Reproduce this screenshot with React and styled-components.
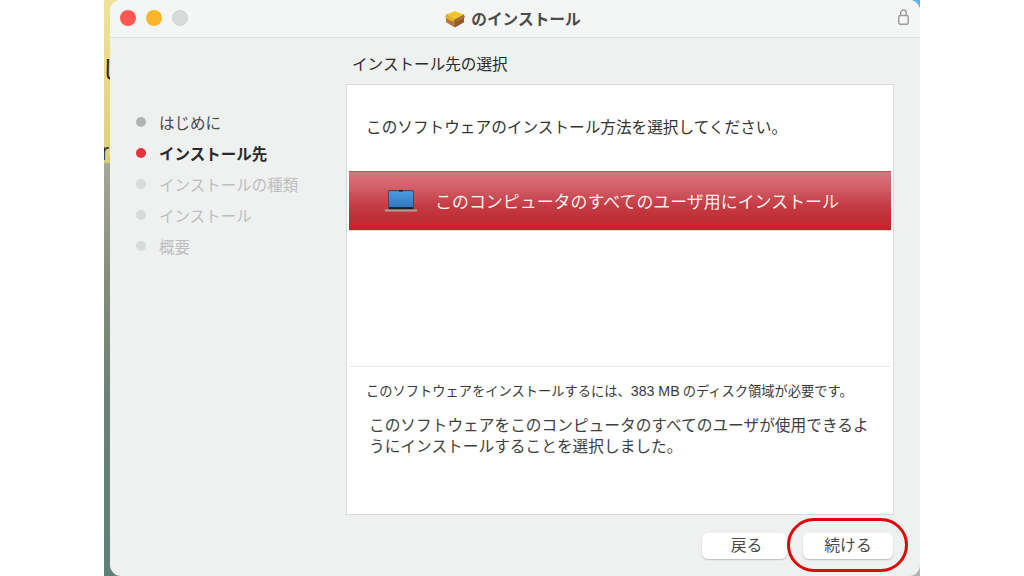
import React from 'react';
import styled, {createGlobalStyle} from 'styled-components';

const GlobalStyle = createGlobalStyle`
  html, body {
    margin: 0;
    padding: 0;
    background: #fff;
  }
  body {
    font-family: "Liberation Sans", "Noto Sans CJK JP", sans-serif;
  }
`

const steps = [
  {label: 'はじめに', state: 'done'},
  {label: 'インストール先', state: 'active'},
  {label: 'インストールの種類', state: 'todo'},
  {label: 'インストール', state: 'todo'},
  {label: '概要', state: 'todo'},
]

const dotColor = {done: '#b2b3b3', active: '#e5343d', todo: '#d9dada'}
const textColor = {done: '#4a4a4a', active: '#2a2a2a', todo: '#bdbebe'}

const PackageIcon = () => (
  <svg width="20" height="18" viewBox="0 0 21 19">
    <path d="M10.5 7 L20 4.5 V13 L10.5 18.5 Z" fill="#8f5a30"/>
    <path d="M10.5 7 L1 4.5 V13 L10.5 18.5 Z" fill="#b8743c"/>
    <path d="M1 5 L10.5 1 L20 5 L10.5 10 Z" fill="#f0c52c"/>
    <path d="M1 5 L10.5 10 L8 12.5 L0 8 Z" fill="#e3b128"/>
    <path d="M20 5 L10.5 10 L13 12.5 L21 8 Z" fill="#a96f38"/>
  </svg>
)

const LockIcon = () => (
  <svg width="11" height="16" viewBox="0 0 11 16" fill="none" stroke="#9a9a9a" strokeWidth="1.4">
    <rect x="0.8" y="6.5" width="9.4" height="8.7" rx="1.5"/>
    <path d="M2.7 6.5 V3.8 C2.7 0 8.3 0 8.3 3.8 V6.5"/>
  </svg>
)

const LaptopIcon = () => (
  <svg width="34" height="22" viewBox="0 0 34 22">
    <defs>
      <linearGradient id="screen" x1="0" y1="0" x2="0" y2="1">
        <stop offset="0" stopColor="#4a9be0"/>
        <stop offset="1" stopColor="#2f78bd"/>
      </linearGradient>
    </defs>
    <rect x="4" y="0" width="26" height="19.5" rx="1.5" fill="#4a4a4e"/>
    <rect x="5" y="1.2" width="24" height="16" fill="url(#screen)"/>
    <rect x="15" y="0.2" width="4" height="1.2" fill="#111"/>
    <rect x="5" y="17.2" width="24" height="2" fill="#1d1d22"/>
    <path d="M0.5 19.5 H33.5 L33 21 Q33 21.6 32 21.6 H2 Q1 21.6 1 21 Z" fill="#a8a39d"/>
  </svg>
)

const App = () => {
  return (
    <>
      <GlobalStyle/>
      <Stage>
        <WallpaperMark top={56}>し</WallpaperMark>
        <WallpaperMark top={138}>r,</WallpaperMark>
        <Window>
          <TitleBar>
            <Lights>
              <Light color="#fd5753"/>
              <Light color="#fdb52a"/>
              <Light color="#d9dbdb" bordered/>
            </Lights>
            <WindowTitle>
              <PackageIcon/>
              のインストール
            </WindowTitle>
            <LockSlot>
              <LockIcon/>
            </LockSlot>
          </TitleBar>
          <Body>
            <Sidebar>
              {steps.map((el) => (
                <Step key={el.label} state={el.state}>
                  <Dot state={el.state}/>
                  {el.label}
                </Step>
              ))}
            </Sidebar>
            <Main>
              <Heading>インストール先の選択</Heading>
              <Panel>
                <Message>このソフトウェアのインストール方法を選択してください。</Message>
                <Target>
                  <LaptopIcon/>
                  <TargetLabel>このコンピュータのすべてのユーザ用にインストール</TargetLabel>
                </Target>
                <Spacer/>
                <Details>
                  <Size>このソフトウェアをインストールするには、<Amount>383 MB</Amount>のディスク領域が必要です。</Size>
                  <Description>このソフトウェアをこのコンピュータのすべてのユーザが使用できるようにインストールすることを選択しました。</Description>
                </Details>
              </Panel>
              <Footer>
                <Button width={85} shift={4}>戻る</Button>
                <Button width={90}>
                  続ける
                  <Highlight/>
                </Button>
              </Footer>
            </Main>
          </Body>
        </Window>
      </Stage>
    </>
  );
};

const Stage = styled.div`
  position: relative;
  width: 816px;
  height: 576px;
  margin-left: 104px;
  padding-left: 6px;
  box-sizing: border-box;
  overflow: hidden;
  background:
    linear-gradient(90deg, transparent 98%, #5bb4ec 98%) top / 100% 20px no-repeat,
    linear-gradient(90deg, transparent 98%, #b5b5b5 98%) bottom / 100% 20px no-repeat,
    linear-gradient(180deg, #efe39a 0, #dccf7c 162px, #a6a698 164px, #848b7c 280px, #6c8078 400px, #5f7f78 576px);
`
const WallpaperMark = styled.div`
  position: absolute;
  top: ${(p) => p.top}px;
  left: -3px;
  font-size: 24px;
  line-height: 28px;
  color: #2e2b1c;
`
const Window = styled.div`
  width: 810px;
  height: 576px;
  display: flex;
  flex-direction: column;
  background: #eff0f0;
  border-radius: 11px;
  overflow: hidden;
  position: relative;
`
const TitleBar = styled.div`
  height: 37px;
  flex-shrink: 0;
  display: flex;
  align-items: center;
  justify-content: center;
  position: relative;
  background: #f4f5f5;
  border-bottom: 1px solid #dfe0e0;
`
const Lights = styled.div`
  position: absolute;
  left: 10px;
  top: 10px;
  display: flex;
  gap: 10px;
`
const Light = styled.div`
  width: 16px;
  height: 16px;
  border-radius: 50%;
  background: ${(p) => p.color};
  box-sizing: border-box;
  border: ${(p) => (p.bordered ? '1px solid #cfd1d1' : 'none')};
`
const WindowTitle = styled.div`
  display: flex;
  align-items: center;
  gap: 6px;
  font-size: 15.7px;
  font-weight: 700;
  color: #4c4c4c;
  margin-left: -4px;
`
const LockSlot = styled.div`
  position: absolute;
  right: 11px;
  top: 9px;
  display: flex;
`
const Body = styled.div`
  flex: 1;
  display: flex;
  min-height: 0;
`
const Sidebar = styled.div`
  width: 236px;
  flex-shrink: 0;
  box-sizing: border-box;
  padding: 72px 0 0 26px;
  display: flex;
  flex-direction: column;
  gap: 8px;
`
const Step = styled.div`
  display: flex;
  align-items: center;
  gap: 13px;
  height: 23.2px;
  font-size: 15.5px;
  font-weight: ${(p) => (p.state === 'active' ? 700 : 400)};
  color: ${(p) => textColor[p.state]};
`
const Dot = styled.span`
  width: 10px;
  height: 10px;
  border-radius: 50%;
  background: ${(p) => dotColor[p.state]};
`
const Main = styled.div`
  width: 548px;
  display: flex;
  flex-direction: column;
`
const Heading = styled.div`
  height: 46px;
  box-sizing: border-box;
  padding: 17px 0 0 6px;
  font-size: 15.6px;
  line-height: 20px;
  color: #2b2b2b;
`
const Panel = styled.div`
  height: 431px;
  box-sizing: border-box;
  display: flex;
  flex-direction: column;
  background: #fff;
  border: 1px solid #d9dada;
`
const Message = styled.div`
  height: 86px;
  box-sizing: border-box;
  padding: 32px 0 0 19px;
  font-size: 15.65px;
  line-height: 22px;
  color: #333;
`
const Target = styled.div`
  height: 60px;
  margin: 0 2px;
  padding: 0 0 2px 35px;
  box-sizing: border-box;
  display: flex;
  align-items: center;
  gap: 17px;
  background: linear-gradient(180deg, #d9757e 0, #d2606a 25%, #c43a42 60%, #bf2328 100%);
  border-top: 1px solid #cf4a54;
  border-bottom: 1px solid #f0d5d6;
  svg {
    margin-top: 2px;
  }
`
const TargetLabel = styled.span`
  font-size: 16.95px;
  color: #fbeeee;
`
const Spacer = styled.div`
  flex: 1;
`
const Details = styled.div`
  height: 148px;
  margin: 0 2px;
  box-sizing: border-box;
  flex-shrink: 0;
  padding: 15px 18px 0 17px;
  border-top: 1px solid #e8e8e8;
`
const Size = styled.div`
  font-size: 13.25px;
  line-height: 18px;
  color: #3a3a3a;
  white-space: nowrap;
`
const Amount = styled.span`
  font-size: 14.2px;
  margin-right: 3px;
`
const Description = styled.div`
  margin: 15px 0 0 3px;
  font-size: 15.7px;
  line-height: 20.6px;
  color: #3f3f3f;
`
const Footer = styled.div`
  flex: 1;
  display: flex;
  justify-content: flex-end;
  align-items: flex-start;
  gap: 16px;
  padding: 18px 1px 0 0;
`
const Button = styled.div`
  position: relative;
  width: ${(p) => p.width}px;
  height: 26px;
  box-sizing: border-box;
  padding: 0 0 3px ${(p) => p.shift || 0}px;
  display: flex;
  align-items: center;
  justify-content: center;
  background: #fff;
  border-radius: 6px;
  box-shadow: 0 1px 1.5px rgba(0, 0, 0, 0.22);
  font-size: 15.8px;
  color: #4a4a4a;
`
const Highlight = styled.div`
  position: absolute;
  left: -16px;
  top: -15px;
  width: 121px;
  height: 54px;
  box-sizing: border-box;
  border: 3.5px solid #d90a0a;
  border-radius: 27px;
`

export default App;
